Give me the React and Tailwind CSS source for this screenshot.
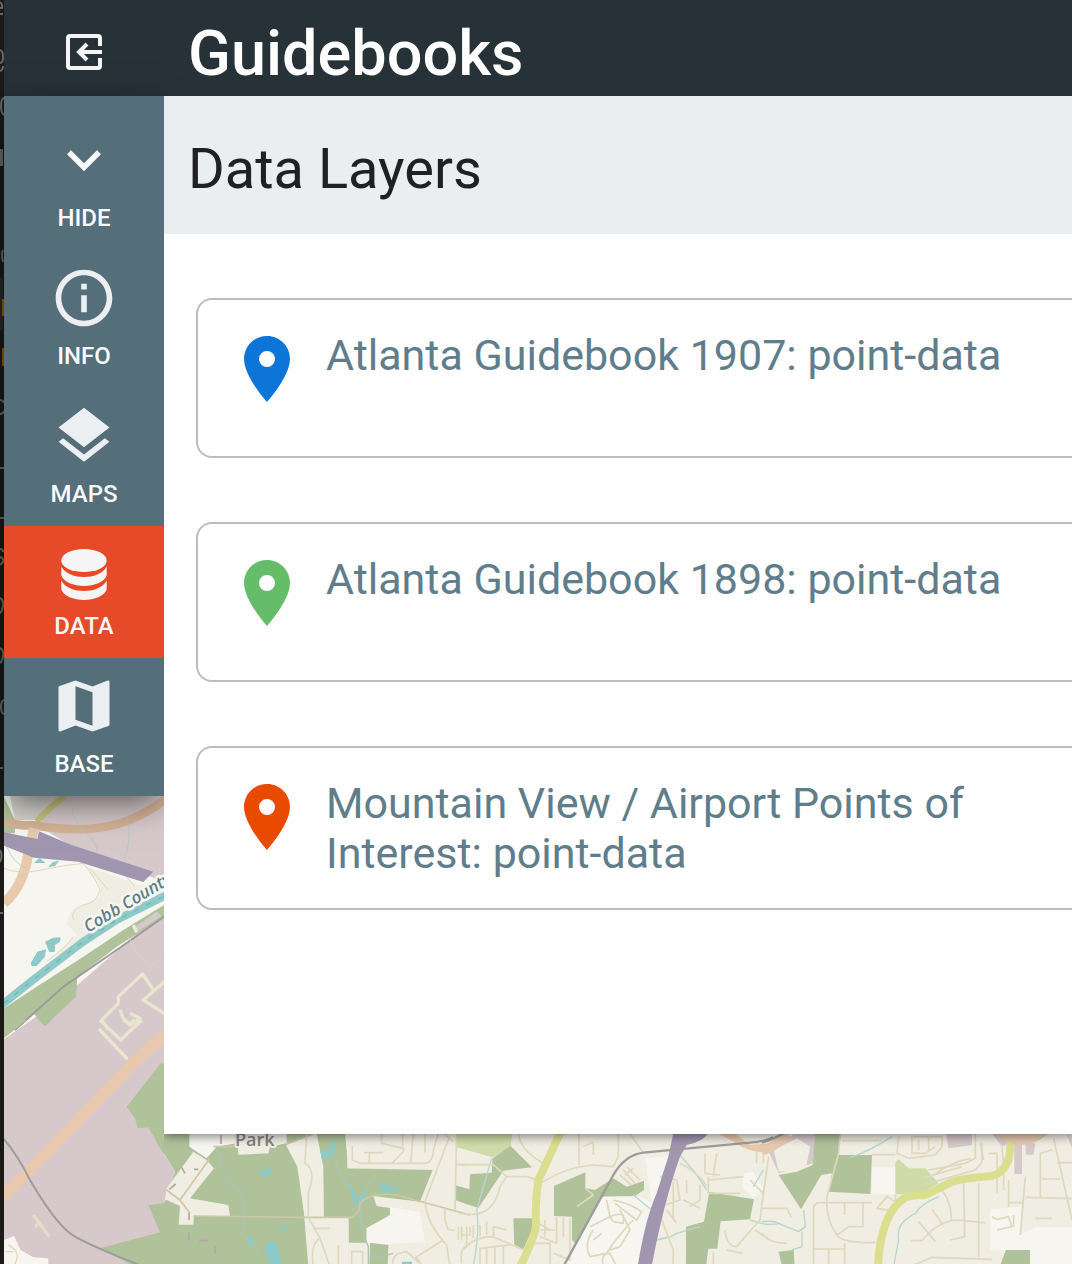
const PARK = "#b0c29a";
const LAND = "#f0ede3";
const PALE = "#f6f5f0";
const MAUVE = "#d6c8cb";
const WATER = "#8ecbc8";
const ROAD = "#ddd9bd";
const ORANGE = "#e8c9ae";
const VIOLET = "#a096b0";
const LIME = "#dadf8f";
const RAIL = "#9c9c9a";
const MEADOW = "#cfdca9";

function WestMap() {
  return (
    <g fill="none" strokeLinejoin="round">
      <path fill={PALE} d="M0 790H170V1040H0Z" />
      <path fill={MAUVE} d="M40 790H170V885L140 872L60 833L43 826Z" />
      <path fill={MAUVE} d="M0 1042L60 1000L170 905V1264H0Z" />
      <g transform="translate(0 790) scale(.3333)">
        <path fill={MAUVE} d="M150 18H500V250L440 260L200 160L120 110L130 70Z" />
        <path fill={PARK} d="M12 20L45 90V130H12Z" />
        <path fill="#d5d3cc" d="M30 18H170L115 90H45Z" />
        <path fill={LAND} d="M260 230L420 285L500 300L140 515L230 435L200 400L215 360L260 340L300 320L300 285Z" />
        <path stroke="#c9c67e" strokeWidth="18" d="M195 18Q140 60 110 95" />
        <path stroke="#d3b295" strokeWidth="26" d="M12 95Q60 108 100 106C250 130 370 125 500 25" />
        <path stroke={ORANGE} strokeWidth="30" d="M102 115L85 190Q70 290 12 340" />
        <path stroke={ROAD} strokeWidth="3" d="M12 235Q60 255 125 240T250 220Q290 270 300 300Q290 340 250 345Q210 360 220 390M270 235L325 300M370 250L405 290M140 515Q200 470 220 440" />
        <path stroke="#aac8c4" strokeWidth="3" opacity=".7" d="M215 50Q220 100 260 130T290 210M380 80Q400 150 370 210M20 170Q40 220 80 235" />
        <path fill={VIOLET} d="M12 127L112 147L117 124L215 165L460 245L430 276L235 215L102 203L12 167Z" />
        <path fill={WATER} d="M102 219L118 204L138 219ZM145 232L158 216L178 212L165 228ZM135 455L160 443L182 442L180 455L165 465V485L148 487ZM92 520L112 485L138 478L135 500L110 528L95 528Z" />
        <path fill={PARK} d="M12 655L110 590L250 500L370 420L500 340V375L350 470L232 560L228 620L135 708L100 670L45 720H12Z" />
        <path stroke={WATER} strokeWidth="24" d="M5 645L105 565L250 455L350 390L500 315" />
        <path stroke="#76aab1" strokeWidth="4" strokeDasharray="16 24" opacity=".7" d="M12 640L105 565L250 455L350 390L500 315" />
        <path stroke={RAIL} strokeWidth="6" d="M45 720L190 590L350 480L500 375" />
        <path fill={MAUVE} d="M405 410L470 365L485 378L412 425Z" />
        <path stroke="#efe9d9" strokeWidth="10" d="M400 405L410 427" />
        <path stroke="#e9e5cf" strokeWidth="10" d="M500 570L430 630L500 675M460 600L428 552L355 620V640L305 690L325 720M360 660L370 685L390 705L420 685L390 670" />
        <path stroke={ROAD} strokeWidth="3" opacity=".7" d="M385 440L410 490L450 530L500 490" />
      </g>
      <text x="88" y="933" transform="rotate(-31 88 933)" fill="#5d7f88" stroke={PALE} strokeWidth="5" paintOrder="stroke" fontFamily="Open Sans, sans-serif" fontSize="17" fontStyle="italic" fontWeight="600">Cobb County</text>
      <g transform="translate(0 1020) scale(.3333)">
        <path fill={PARK} d="M12 0H80L12 55ZM115 0H155L135 18ZM500 130H482L380 260L405 295L413 325L445 322L530 470V0ZM445 555L540 545V732H390L300 685L480 637Z" />
        <path fill={PALE} d="M12 660L42 648L62 690L100 712L145 715V732H12Z" />
        <path stroke="#d7cdbd" strokeWidth="4" opacity=".8" d="M12 130Q90 30 120 75T150 140M12 235Q100 150 140 148Q180 160 200 175Q240 165 270 175L360 250M195 180Q160 250 95 285L65 330M30 215L150 350M378 260Q240 380 280 450Q340 530 290 600Q240 650 145 715M400 345Q320 360 340 430L350 465M413 330Q420 390 495 500M125 440Q190 590 310 585Q360 560 445 553" />
        <path stroke="#e3dec4" strokeWidth="9" d="M100 585L148 650M105 620L120 605" />
        <path stroke={ROAD} strokeWidth="4" d="M25 675Q65 695 45 732M15 695H40" />
        <path stroke="#e9e5cf" strokeWidth="11" d="M297 27L383 118M300 0L362 60L425 0M370 0L390 12L405 0" />
        <path stroke={ORANGE} strokeWidth="34" d="M-10 545L80 460L380 150Q440 85 510 35" />
        <path stroke={RAIL} strokeWidth="6" d="M5 350Q50 400 90 480Q160 600 210 640Q240 665 430 740" />
      </g>
    </g>
  );
}

function SouthMap() {
  return (
    <g fill="none" strokeLinejoin="round">
      <g transform="translate(160 1120) scale(.3333)">
        <path fill={LAND} d="M12 0H2760V440H440Z" />
        <path fill={PARK} d="M0 0H470L555 40L565 145H820L780 245L640 228L650 258L695 265V285L620 325V368H567L565 292H492V440H0V255L15 245L45 155L0 80Z" />
        <path fill={MAUVE} d="M0 80L45 155L12 250L0 252Z" />
        <path fill={LAND} d="M560 30H900V120L820 150L562 145ZM140 120L162 145L90 235L205 255L210 288H102L100 314H56L60 258L15 238L20 205L100 95ZM378 75L470 40L490 140L492 292H565V440H445L432 280L412 140ZM230 40H380V70L330 80L325 100L235 104Z" />
        <path fill={PALE} d="M88 40H230V70L170 80L140 115L88 80ZM690 262L780 275L795 365L640 375L620 368V325L690 285Z" />
        <path fill={PARK} d="M630 368L685 375L683 440H628ZM885 195L930 210V255L885 240Z" />
        <path fill={MEADOW} d="M890 40H1055L1053 80L998 112L890 82Z" />
        <path fill={WATER} d="M510 65H525L523 100L505 115H485L481 92L508 88ZM298 155L330 145L340 158L305 172ZM563 190L573 195L590 235L620 212L615 235L585 256ZM658 200L675 185L685 203L714 198L710 212L675 218L660 212ZM362 320L382 318L380 330L366 332ZM258 350L272 348L282 370L275 378L262 372ZM318 370L350 364L366 432H330L315 395ZM726 425H756V440H726Z" />
        <path stroke="#a7c5ba" strokeWidth="4" d="M175 90Q180 170 240 210Q260 260 248 340L300 410M525 110Q530 170 570 200M645 160L610 220M600 250Q600 330 625 380V440M700 400L640 415" />
        <path stroke="#ccc7a6" strokeWidth="5" d="M100 288L430 292H575Q600 280 600 250Q630 215 710 225L930 285M20 210L60 240L90 280M150 115L60 240M160 80H230M380 72L450 45" />
        <path stroke={ROAD} strokeWidth="5" d="M440 40L435 130Q470 150 445 220V292L480 355L510 440M465 325H510M460 440Q450 370 480 355M535 440V375M575 440V395H608V440M577 78V120L600 130H790Q820 130 820 90L835 40M665 40V70L730 85V95L695 130M728 40V80M612 98H670M628 98V130M760 40L752 130M795 40V98M850 40L880 65M870 45L795 245Q800 310 860 375L870 440M890 40L885 270M890 134H930M855 265V300L865 330H885M850 360L768 412L790 440M700 440Q690 400 740 395L780 430M895 320V360M905 320V360M920 320V380Q900 380 905 430" />
        <path stroke="#b1a8a6" strokeWidth="5" d="M183 45V72M28 208L47 192M65 142L75 160M102 148H115M87 278V300M87 338V360M118 362H144M165 376V402" />
      </g>
      <text x="235" y="1146" fill="#85837f" stroke={LAND} strokeWidth="4" paintOrder="stroke" fontFamily="Open Sans, sans-serif" fontSize="18" fontWeight="600">Park</text>
      <g transform="translate(460 1120) scale(.3333)">
        <path fill={MEADOW} d="M0 40H155L152 80L98 112L55 90L0 82Z" />
        <path fill={PARK} d="M152 78L216 142L130 152L55 264L0 245V200L28 208L30 163L95 158L98 115ZM282 198L376 157V205L405 210L460 175L500 200L552 182V210L525 228L425 230L345 370L336 360V290L282 288ZM160 295H216V330L190 388L163 374ZM748 216L882 238L870 298L782 304L772 386H745L738 440H678V320L732 305Z" />
        <path fill={PALE} d="M430 230H545L575 250L555 115L630 108L535 440H310ZM850 160L880 155L910 210L880 235L850 205Z" />
        <path stroke="#b5d6d1" strokeWidth="4" d="M95 115L50 270Q60 330 40 440M520 225L575 270M660 105Q700 150 710 165T740 210M590 360Q640 350 650 340L720 320M870 300Q920 320 960 310M910 150L880 200" />
        <path stroke={ROAD} strokeWidth="5" d="M175 40Q180 90 250 130M0 134H100L140 170H200L250 185Q320 140 400 135L460 140L475 110V40M0 280Q100 300 120 200L140 170M357 40V135M400 70V105M510 40L550 100M370 80L400 65M376 205L400 225L350 260M600 170L650 180L660 240L600 260M660 130Q720 160 740 200M735 100V160L780 165M770 100L760 170M745 170V220H840M745 180L850 170M890 70V130M910 80V130M870 180L910 220L900 300L830 380Q800 380 795 330M885 330L930 360M590 260L640 390V440M640 185V300M680 180V220M720 195V240L690 260M670 240L720 265M620 270L650 310M760 395V440M800 390L850 400" />
        <path stroke={ROAD} strokeWidth="5" d="M5 320V345H30V320M40 355V315M60 350V315M80 345V305M100 350V320L140 330M10 390Q40 350 100 350L190 390M60 440V385L150 375M80 380V440M105 380V440M130 380V440M235 310L270 330M240 330H285M255 300V350M290 290V370M310 290V350M330 295V420L280 400M240 350L290 370M220 370H270V440M500 140L540 180M490 150L525 190M480 165L515 195M495 165L520 145" />
        <path stroke={ROAD} strokeWidth="5" d="M460 240Q510 250 545 275L530 300L465 250M440 240L450 290L390 320M400 330Q370 370 390 410L440 400L460 370L500 320L520 300M450 290Q470 280 490 285V310L460 305L450 290M480 270L510 330L480 380L450 390M425 340L400 360M430 440Q420 400 450 400L470 440" />
        <path stroke={LIME} strokeWidth="24" strokeLinecap="square" d="M300 40L235 180Q225 240 228 310Q230 340 180 440" />
        <path fill={VIOLET} d="M640 40H745Q730 65 680 75L660 110Q610 250 575 440H533Q555 300 590 220L625 110Z" />
        <path fill={ORANGE} d="M775 40H825L870 75L930 70V98Q880 98 845 80Z" />
        <path stroke={RAIL} strokeWidth="7" d="M310 440L460 165Q495 105 550 98L870 68Q910 66 940 52" />
      </g>
      <g transform="translate(762 1120) scale(.3333)">
        <path fill={MAUVE} d="M20 95L100 40H165L152 130L50 160ZM552 40H630V75L560 85ZM690 40H780V162H757V60L720 80ZM790 70H820L815 104H792ZM912 40H930V85Z" />
        <path fill={LAND} d="M35 90L105 55L145 80L130 150L50 155Z" />
        <path fill={PARK} d="M160 40H235L230 105H330L325 222L200 215L210 160L178 165L117 268L50 165L105 155L152 135ZM50 395L95 390L98 440H60ZM732 390H804V440H713Z" />
        <path fill={PALE} d="M330 142H400V222H330ZM685 268L780 260L775 345L820 322H930V440H805V390H683Z" />
        <path fill={MEADOW} d="M400 128L410 118L440 145H490L530 190L470 225L400 222Z" />
        <path stroke={ORANGE} strokeWidth="28" d="M0 92Q30 85 80 45" />
        <path stroke={RAIL} strokeWidth="7" d="M0 68Q30 60 65 40" />
        <path stroke="#b5d6d1" strokeWidth="4" d="M390 50Q330 90 260 115M530 230Q480 250 460 280Q400 310 410 360L395 440M0 305Q40 300 60 315L110 335L130 320L125 270M120 335V380L90 390" />
        <path stroke={ROAD} strokeWidth="5" d="M235 40L230 100L195 230Q190 300 225 345Q240 370 340 368M240 62H360M330 104H400M165 248H330M155 440V260L165 248M155 387H248V440M248 370V387M200 390V440M248 250V285M303 250V320H260L225 345M0 265H75L88 292M0 340Q20 370 75 370M20 110L0 250M400 225V245L375 230L345 265L385 272L400 245M410 50L405 100L440 115L520 105L540 80V50H450V100H490L520 80M470 60V90M500 50V90M640 40V115L610 130L500 150M480 175L600 140M500 190L640 150L660 125V70M515 165Q570 125 625 115M655 70L665 120M680 100H705V220M720 80L725 140V210M605 190L608 350L565 360M650 190V410M540 210Q570 250 568 300M445 362H480Q520 310 580 300L670 308M470 305L520 365M510 268L540 310M445 440L510 412L690 418M740 180V260M740 248H785M690 290L705 298L740 290L750 320L705 330M755 285V320M775 345L790 170M875 55L930 300M835 235V100L870 90M840 177H895M790 232L930 236M885 128H930M820 295H870" />
        <path stroke={LIME} strokeWidth="24" d="M348 440Q355 280 430 232Q450 225 490 225L560 190Q590 175 690 168Q750 150 745 60" />
        <path fill={ORANGE} d="M700 40H860Q820 75 780 74Q740 72 700 45Z" />
      </g>
    </g>
  );
}

function MapBackdrop() {
  return (
    <svg
      className="absolute inset-0 h-full w-full"
      viewBox="0 0 1072 1264"
      preserveAspectRatio="xMinYMin slice"
      role="img"
      aria-label="Street map"
    >
      <rect width="1072" height="1264" fill={LAND} />
      <SouthMap />
      <clipPath id="west">
        <rect y="780" width="164" height="484" />
      </clipPath>
      <g clipPath="url(#west)">
        <WestMap />
      </g>
    </svg>
  );
}

function EdgeStrip() {
  return (
    <svg className="w-1 shrink-0 bg-[#1b1a18]" viewBox="0 0 4 1264" preserveAspectRatio="xMinYMin slice" aria-hidden="true">
      <path fill="#292929" d="M0 278H3V330H0Z" />
      <path fill="none" stroke="#696764" strokeWidth="2" d="M0 2Q3 4 2 8H0M0 14H3M0 50Q3 51 3 57T0 63M0 71Q3 70 3 66M4 98Q1 99 1 106T4 115M3 250Q1 254 3 262M0 400Q3 400 4 403M0 414Q3 414 4 411M0 468H4M0 518H4M0 549Q3 549 3 552M0 557Q4 558 3 562L0 565M0 598Q4 600 3 606T0 613M0 648Q4 650 3 656T0 663M4 700Q1 701 1 707T4 714M0 768H3M0 850Q3 855 0 862M0 913H3" />
      <path fill="#696764" d="M0 149H3V166H0Z" />
      <path fill="#915507" d="M2 299H4V316H2ZM2 348H4V366H2Z" />
    </svg>
  );
}

function ExitIcon() {
  return (
    <svg className="h-9 w-9" viewBox="0 0 36 36" aria-hidden="true" fill="none" stroke="#f5f5f5" strokeWidth="4">
      <path d="M34 12V4Q34 2 32 2H4Q2 2 2 4V32Q2 34 4 34H32Q34 34 34 32V24" />
      <path d="M36 18H12M21 10L13 18L21 26" />
    </svg>
  );
}

const icons = {
  hide: <path fill="#fafafa" d="M7.41 8.59 12 13.17l4.59-4.58L18 10l-6 6-6-6z" />,
  info: <path d="M11 7h2v2h-2zm0 4h2v6h-2zm1-9C6.48 2 2 6.48 2 12s4.480 10 10 10 10-4.480 10-10S17.520 2 12 2zm0 18c-4.410 0-8-3.590-8-8s3.590-8 8-8 8 3.590 8 8-3.590 8-8 8z" />,
  maps: <path d="m11.990 18.540-7.370-5.730L3 14.070l9 7 9-7-1.630-1.270zM12 16l7.360-5.730L21 9l-9-7-9 7 1.630 1.270z" />,
  base: <path d="m20.500 3-.16.030L15 5.100 9 3 3.360 4.900c-.21.070-.36.250-.36.480V20.500c0 .28.220.5.500.5l.16-.03L9 18.900l6 2.100 5.640-1.900c.21-.07.360-.25.360-.48V3.500c0-.28-.22-.5-.5-.5zM15 19l-6-2.110V5l6 2.110z" />,
};

function NavIcon({ name }) {
  if (name === "data") {
    return (
      <svg className="h-[62px] w-[62px]" viewBox="-1 -1 62 62" fill="#f5f5f5" aria-hidden="true">
        <ellipse cx="30" cy="19.500" rx="22.700" ry="11.500" />
        <path d="M7.300 25.500C11 33 21 36 30 36S49 33 52.700 25.500V34C51 41 40 45 30 45S9 41 7.300 34Z" />
        <path d="M7.300 39.500C11 47 21 50 30 50S49 47 52.700 39.500V48C51 55 40 59 30 59S9 55 7.300 48Z" />
      </svg>
    );
  }
  return (
    <svg className="h-[68px] w-[68px]" viewBox="0 0 24 24" fill="#eceff1" aria-hidden="true">
      {icons[name]}
    </svg>
  );
}

const navItems = [
  { name: "hide", label: "HIDE" },
  { name: "info", label: "INFO" },
  { name: "maps", label: "MAPS" },
  { name: "data", label: "DATA", active: true },
  { name: "base", label: "BASE" },
];

const layers = [
  { title: "Atlanta Guidebook 1907: point-data", color: "#0d74d8" },
  { title: "Atlanta Guidebook 1898: point-data", color: "#66bd69" },
  { title: "Mountain View / Airport Points of Interest: point-data", color: "#e84a00" },
];

function Pin({ color }) {
  return (
    <svg className="mt-1 h-[66px] w-[46px] shrink-0" viewBox="0 0 46 66" fill={color} aria-hidden="true">
      <path fillRule="evenodd" d="M23 0C10.200 0 0 10.200 0 23C0 40.500 23 66 23 66S46 40.500 46 23C46 10.200 35.800 0 23 0ZM23 15A8 8 0 1 1 23 31A8 8 0 1 1 23 15Z" />
    </svg>
  );
}

export default function App() {
  return (
    <div className="flex min-h-screen overflow-hidden bg-[#1b1a18] font-[Roboto,sans-serif]">
      <EdgeStrip />
      <div className="relative isolate flex min-w-0 flex-1 flex-col">
        <div className="absolute inset-y-0 right-0 -left-1 -z-10 [clip-path:inset(0_0_0_4px)]">
          <MapBackdrop />
        </div>
        <header className="flex h-24 items-center bg-[#263238] text-white">
          <button className="flex w-40 shrink-0 justify-center pt-2" aria-label="Exit">
            <ExitIcon />
          </button>
          <h1 className="pt-3 pl-6 text-[63px] leading-[80px] font-medium">Guidebooks</h1>
        </header>
        <div className="flex items-start">
          <nav className="w-40 shrink-0 bg-[#546e7a] pt-4 shadow-[0_10px_32px_-4px_rgba(0,0,0,0.6)]">
            {navItems.map((item) => (
              <button
                key={item.name}
                aria-current={item.active ? "page" : undefined}
                className={
                  item.active
                    ? "flex w-full flex-col items-center gap-[11px] bg-[#e64a29] pt-[14px] pb-[19px] text-2xl leading-[26px] font-medium text-neutral-100"
                    : "flex w-full flex-col items-center gap-[11px] pt-[14px] pb-[19px] text-2xl leading-[26px] font-medium text-neutral-50"
                }
              >
                <NavIcon name={item.name} />
                {item.label}
              </button>
            ))}
          </nav>
          <main className="relative min-w-0 flex-1 bg-white pb-56 shadow-[0_2px_10px_rgba(0,0,0,0.5)] [clip-path:inset(0_-20px_-20px_0)]">
            <h2 className="bg-[#eaeef1] pt-[38px] pb-[30px] pl-6 text-[56px] leading-[70px] text-[#212121]">Data Layers</h2>
            <ul className="flex flex-col gap-16 overflow-hidden pt-16 pl-8">
              {layers.map((layer) => (
                <li key={layer.title} className="-mr-4 min-h-40 rounded-2xl border-2 border-[#bdbdbd]">
                  <button className="flex w-full items-start gap-9 pt-8 pb-7 pr-16 pl-[46px] text-left text-[43px] leading-[50px] text-[#607d8b]">
                    <Pin color={layer.color} />
                    <span className="-mt-0.5 pb-0.5">{layer.title}</span>
                  </button>
                </li>
              ))}
            </ul>
          </main>
        </div>
      </div>
    </div>
  );
}
